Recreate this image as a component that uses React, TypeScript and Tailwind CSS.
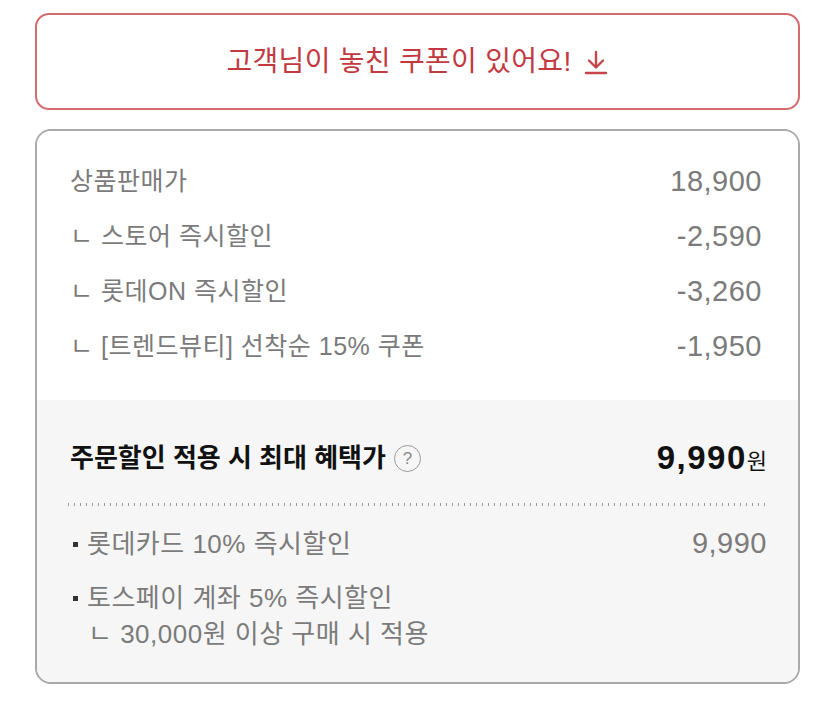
import React from 'react';

const font = "font-['Liberation_Sans','Noto_Sans_CJK_KR',sans-serif]";

const priceRows = [
  { label: '상품판매가', value: '18,900' },
  { label: 'ㄴ 스토어 즉시할인', value: '-2,590' },
  { label: 'ㄴ 롯데ON 즉시할인', value: '-3,260' },
  { label: 'ㄴ [트렌드뷰티] 선착순 15% 쿠폰', value: '-1,950' },
];

const DownloadArrow = () => (
  <svg width="26" height="26" viewBox="0 0 26 26" fill="none" stroke="#c8464b" strokeWidth="2.4" strokeLinecap="round" strokeLinejoin="round">
    <path d="M13 3v15" />
    <path d="M6 11.5l7 7 7-7" />
    <path d="M3 24h20" />
  </svg>
);

const HelpIcon = () => (
  <span className="ml-[8px] flex h-[27px] w-[27px] items-center justify-center rounded-full border-[1.5px] border-[#9a9a9a] text-[17px] leading-none text-[#8a8a8a]">
    ?
  </span>
);

export default function App() {
  return (
    <div className={`min-h-[717px] w-[835px] bg-white px-[35px] pt-[13px] ${font}`}>
      {/* coupon banner */}
      <button className="flex h-[97px] w-full items-center justify-center gap-[11px] rounded-[14px] border-2 border-[#d46b6e] bg-white">
        <span className="text-[28px] font-normal tracking-[0.3px] text-[#c23a3f]">고객님이 놓친 쿠폰이 있어요!</span>
        <DownloadArrow />
      </button>

      {/* price card */}
      <div className="mt-[19px] h-[555px] overflow-hidden rounded-[16px] border-2 border-[#a9a9a9]">
        <div className="bg-white px-[33px] pt-[23px] pb-[26px]">
          {priceRows.map((row) => (
            <div key={row.label} className="flex h-[55px] items-center justify-between text-[#7b7b7b]">
              <span className="text-[25px] tracking-[0.5px]">{row.label}</span>
              <span className="pr-[3px] text-[29px] tracking-[0.5px]">{row.value}</span>
            </div>
          ))}
        </div>

        <div className="h-full bg-[#f6f6f6] px-[31px] pt-[38px]">
          <div className="flex h-[40px] items-center justify-between pl-[2px]">
            <div className="flex items-center">
              <span className="text-[26px] font-bold text-[#111]">주문할인 적용 시 최대 혜택가</span>
              <HelpIcon />
            </div>
            <div className="flex items-baseline text-[#111]">
              <span className="text-[33px] font-bold tracking-[1.5px]">9,990</span>
              <span className="text-[22px]">원</span>
            </div>
          </div>

          <div className="mt-[25px] h-[3px] w-full bg-[linear-gradient(to_right,#9c9c9c_1.5px,transparent_1.5px)] bg-[length:6px_3px]" />

          <div className="mt-[18px] flex h-[40px] items-center justify-between pl-[5px] text-[#7b7b7b]">
            <div className="flex items-center">
              <span className="mr-[9px] h-[5px] w-[5px] bg-[#333]" />
              <span className="text-[26px] tracking-[0.5px]">롯데카드 10% 즉시할인</span>
            </div>
            <span className="text-[29px] tracking-[0.5px]">9,990</span>
          </div>

          <div className="mt-[16px] flex h-[36px] items-center pl-[5px] text-[#7b7b7b]">
            <span className="mr-[9px] h-[5px] w-[5px] bg-[#333]" />
            <span className="text-[26px] tracking-[0.5px]">토스페이 계좌 5% 즉시할인</span>
          </div>
          <div className="flex h-[36px] items-center pl-[20px] text-[26px] tracking-[0.5px] text-[#7b7b7b]">
            ㄴ 30,000원 이상 구매 시 적용
          </div>
        </div>
      </div>
    </div>
  );
}
